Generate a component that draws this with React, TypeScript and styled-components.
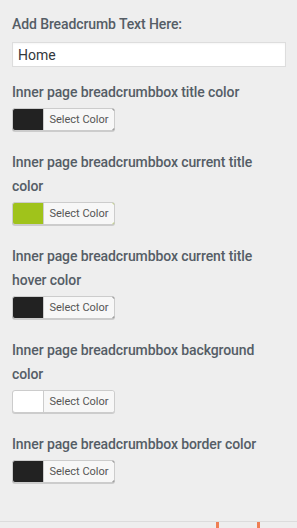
import React from "react";
import styled, { createGlobalStyle } from "styled-components";

const Global = createGlobalStyle`
  html, body { margin: 0; padding: 0; background: #eeeeee; }
  body { font-family: Roboto, "Liberation Sans", Arial, sans-serif; }
  * { box-sizing: border-box; }
`;

const Panel = styled.div`
  width: 297px;
  height: 528px;
  background: #eeeeee;
  display: flex;
  flex-direction: column;
  overflow: hidden;
`;

const Controls = styled.div`
  padding: 12px 11px 0 12px;
  display: flex;
  flex-direction: column;
  flex: 1;
`;

const Field = styled.div<{ $gap: number }>`
  display: flex;
  flex-direction: column;
  margin-bottom: ${(p) => p.$gap}px;
`;

const Label = styled.div<{ $space: number }>`
  font-size: 14px;
  font-weight: 500;
  line-height: 24px;
  letter-spacing: -0.1px;
  color: #555d66;
  margin-bottom: ${(p) => p.$space}px;
`;

const TextInput = styled.input`
  width: 274px;
  height: 25px;
  margin: 0;
  padding: 0 5px;
  border: 1px solid #dddddd;
  background: #ffffff;
  box-shadow: inset 0 1px 2px rgba(0, 0, 0, 0.04);
  font-family: Roboto, "Liberation Sans", Arial, sans-serif;
  font-size: 14px;
  color: #32373c;
  outline: none;
`;

const ColorButton = styled.button<{ $swatch: string }>`
  display: flex;
  align-self: flex-start;
  height: 23px;
  width: 103px;
  margin: 0;
  padding: 0 0 0 30px;
  border: 1px solid #cccccc;
  border-radius: 3px;
  background: ${(p) => p.$swatch};
  box-shadow: 0 1px 0 #cccccc;
  overflow: hidden;
  cursor: pointer;
`;

const ButtonText = styled.span`
  display: block;
  flex: 1;
  height: 100%;
  background: #f7f7f7;
  border-left: 1px solid #cccccc;
  border-radius: 0 2px 2px 0;
  color: #555555;
  font-family: Roboto, "Liberation Sans", Arial, sans-serif;
  font-size: 11px;
  line-height: 21px;
  text-align: center;
`;

const Footer = styled.div`
  height: 7px;
  border-top: 1px solid #dcdcdc;
  position: relative;
`;

const Tick = styled.span<{ $x: number }>`
  position: absolute;
  top: 0;
  left: ${(p) => p.$x}px;
  width: 3px;
  height: 7px;
  background: #ef7f55;
`;

const colors = [
  { label: "Inner page breadcrumbbox title color", swatch: "#222222" },
  { label: "Inner page breadcrumbbox current title color", swatch: "#a0c31b" },
  { label: "Inner page breadcrumbbox current title hover color", swatch: "#222222" },
  { label: "Inner page breadcrumbbox background color", swatch: "#ffffff" },
  { label: "Inner page breadcrumbbox border color", swatch: "#222222" },
];

export default function App() {
  return (
    <Panel>
      <Global />
      <Controls>
        <Field $gap={13}>
          <Label $space={6}>Add Breadcrumb Text Here:</Label>
          <TextInput defaultValue="Home" />
        </Field>
        {colors.map((c) => (
          <Field key={c.label} $gap={19}>
            <Label $space={4}>{c.label}</Label>
            <ColorButton $swatch={c.swatch}>
              <ButtonText>Select Color</ButtonText>
            </ColorButton>
          </Field>
        ))}
      </Controls>
      <Footer>
        <Tick $x={216} />
        <Tick $x={257} />
      </Footer>
    </Panel>
  );
}
